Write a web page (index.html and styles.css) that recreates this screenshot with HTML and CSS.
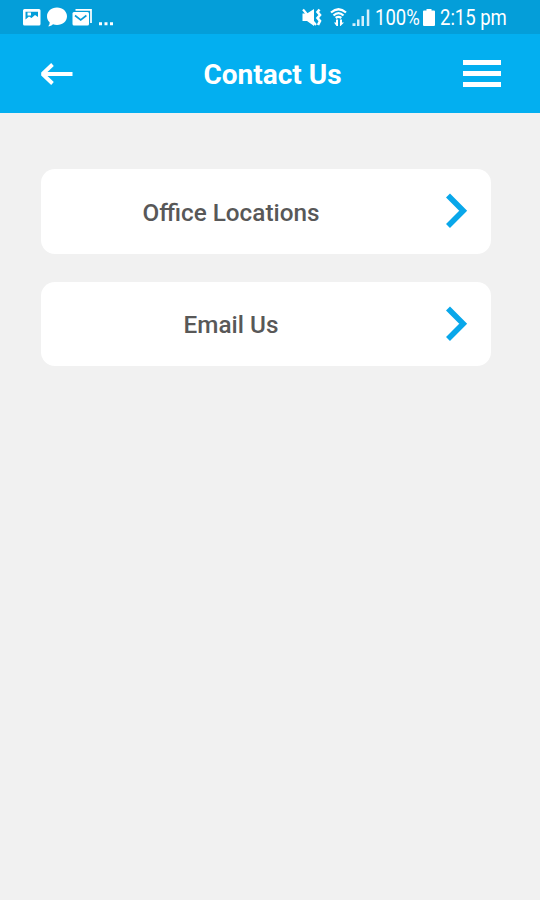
FILE: index.html
```
<!DOCTYPE html>
<html lang="en">
<head>
    <meta charset="utf-8">
    <title>Contact Us</title>
    <link rel="stylesheet" href="styles.css">
</head>
<body>
    <div class="status-bar">
        <svg class="icon-left" width="92" height="34" viewBox="0 0 92 34">
            <!-- gallery -->
            <path fill="#fff" fill-rule="evenodd" d="M2.500 9H17Q18.500 9 18.500 10.500V24Q18.500 25.500 17 25.500H2.500Q1 25.500 1 24V10.500Q1 9 2.500 9ZM3.500 11.800V19.500L7 16.500L9.500 18L13 15L16 17V11.800Z"/>
            <rect fill="#fff" x="5.500" y="12.500" width="3.500" height="3"/>
            <!-- chat -->
            <path fill="#fff" d="M35 7.500C40.800 7.500 45 11.500 45 16.300C45 21.200 40.800 25 35 25C33.500 25 32.200 24.800 31 24.300C29.500 25.700 28 26.300 26 26.300C27.300 25.200 27.800 23.700 27.600 22.200C25.800 20.700 25 18.800 25 16.300C25 11.500 29.200 7.500 35 7.500Z"/>
            <!-- mail -->
            <path fill="none" stroke="#fff" stroke-width="1.700" d="M53.500 9.900H69V23"/>
            <rect fill="#fff" x="50.500" y="12" width="16.500" height="13.500" rx="1.500"/>
            <path fill="none" stroke="#0a9cd8" stroke-width="1.600" d="M53 15.500L58.700 20L64.400 15.500"/>
            <path fill="#fff" d="M77 22.300H80V25.300H77ZM82.500 22.300H85.500V25.300H82.500ZM88 22.300H91V25.300H88Z"/>
        </svg>
        <div class="status-right">
            <svg width="70" height="34" viewBox="0 0 70 34">
                <!-- vibrate -->
                <path fill="#fff" d="M0.500 13.500H5L12 9V26L5 21H0.500Z"/>
                <path fill="none" stroke="#fff" stroke-width="2.200" d="M1 9.500L14 25"/>
                <path fill="none" stroke="#fff" stroke-width="2.600" d="M17.500 9.500L15.500 12L18 15L15.500 18L18 21L16 25"/>
                <!-- wifi -->
                <path fill="none" stroke="#fff" stroke-width="2.300" d="M29 12.500Q36.500 6 44 12.500M31.500 15.500Q36.500 10.800 41.500 15.500M33.700 18Q36.500 15.800 39.300 18"/>
                <path fill="#fff" d="M34 19.500H36V26H34.500L32 22.500H34ZM38 19.500H40V22.500H42L38.500 26H38Z"/>
                <!-- signal -->
                <path fill="#d5effb" d="M50.500 23.300H53.500V26H50.500ZM55 19.500H57.500V26H55ZM59.500 16H62V26H59.500ZM64.800 9.500H67.300V26H64.800Z"/>
            </svg>
            <span class="percent"><span>100%</span></span>
            <svg class="battery" width="12" height="34" viewBox="0 0 12 34">
                <path fill="#fff" d="M3.500 9H8.500V10.500H11Q12 10.500 12 11.500V25Q12 26 11 26H1Q0 26 0 25V11.500Q0 10.500 1 10.500H3.500Z"/>
            </svg>
            <span class="time"><span>2:15 pm</span></span>
        </div>
    </div>

    <header class="header">
        <svg class="back" width="34" height="24" viewBox="0 0 34 24">
            <path fill="none" stroke="#fff" stroke-width="3.800" stroke-linejoin="bevel" d="M32.500 12H2.500M12.500 2.500L2.500 12L12.500 21.500"/>
        </svg>
        <h1>Contact Us</h1>
        <div class="menu">
            <span></span>
            <span></span>
            <span></span>
        </div>
    </header>

    <main class="list">
        <a class="item">
            <span class="label">Office Locations</span>
            <svg width="22" height="36" viewBox="0 0 22 36">
                <path fill="none" stroke="#09a7ea" stroke-width="5.600" d="M2 2.500L17.200 17.800L2 33"/>
            </svg>
        </a>
        <a class="item">
            <span class="label">Email Us</span>
            <svg width="22" height="36" viewBox="0 0 22 36">
                <path fill="none" stroke="#09a7ea" stroke-width="5.600" d="M2 2.500L17.200 17.800L2 33"/>
            </svg>
        </a>
    </main>
</body>
</html>
```
FILE: styles.css
```
* {
    box-sizing: border-box;
}

body {
    margin: 0;
    min-height: 100vh;
    background: #f1f1f1;
    font-family: Roboto, sans-serif;
}

.status-bar {
    display: flex;
    justify-content: space-between;
    height: 34px;
    padding: 0 33px 0 22px;
    background: #049ed9;
    color: #fff;
    font-size: 21.500px;
    line-height: 36px;
    white-space: nowrap;
}

.status-right {
    display: flex;
}

/* narrow status text */
.percent,
.time {
    height: 34px;
}

.percent {
    width: 45px;
    margin-left: 3px;
}

.time {
    width: 67px;
}

.percent span,
.time span {
    display: inline-block;
    transform: scaleX(0.86);
    transform-origin: left center;
}

.battery {
    margin: 0 5px 0 3px;
}

.header {
    display: flex;
    justify-content: space-between;
    align-items: center;
    height: 79px;
    padding: 0 39px 0 40px;
    background: #03aff0;
}

.header h1 {
    margin: 3px 0 0 8px;
    color: #fff;
    font-size: 28px;
    font-weight: 700;
    line-height: 32px;
}

.menu {
    display: flex;
    flex-direction: column;
    gap: 6px;
    width: 38px;
}

.menu span {
    height: 5px;
    background: #fff;
}

.list {
    display: flex;
    flex-direction: column;
    gap: 28px;
    padding: 56px 49px 0 41px;
}

.item {
    display: flex;
    align-items: center;
    height: 84.500px;
    padding: 0 23px 0 0;
    border-radius: 14px;
    background: #fff;
}

.label {
    flex: 1;
    padding: 2px 25px 0 0;
    color: #585858;
    font-size: 24.300px;
    font-weight: 500;
    text-align: center;
}
```
